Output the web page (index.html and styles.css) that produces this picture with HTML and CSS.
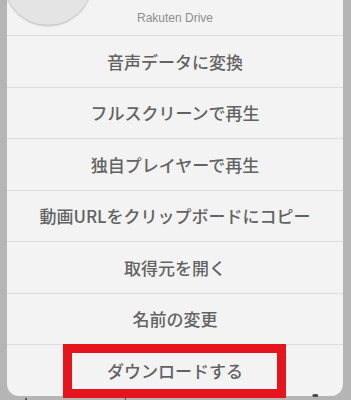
FILE: index.html
```html
<!DOCTYPE html>
<html lang="ja">
<head>
<meta charset="utf-8">
<link rel="stylesheet" href="styles.css">
</head>
<body>
<div class="screen">
  <div class="sheet">
    <div class="avatar"></div>
    <div class="header">Rakuten Drive</div>
    <div class="row">音声データに変換</div>
    <div class="row">フルスクリーンで再生</div>
    <div class="row">独自プレイヤーで再生</div>
    <div class="row">動画URLをクリップボードにコピー</div>
    <div class="row">取得元を開く</div>
    <div class="row">名前の変更</div>
    <div class="row">ダウンロードする</div>
  </div>
  <div class="highlight"></div>
  <div class="tb tb1"></div>
  <div class="tb tb2"></div>
  <div class="tb tb3">•••</div>
</div>
</body>
</html>
```
FILE: styles.css
```css
html, body {
  margin: 0;
  padding: 0;
}
body {
  background: #b5b5b5;
  font-family: "Noto Sans CJK JP", "Noto Sans", sans-serif;
  overflow: hidden;
}
.screen {
  position: relative;
  width: 351px;
  height: 400px;
  overflow: hidden;
}
.sheet {
  position: relative;
  margin-left: 7px;
  width: 336px;
  background: #f3f3f3;
  border-radius: 0 0 12px 12px;
  overflow: hidden;
}
.avatar {
  position: absolute;
  left: -3px;
  top: -63px;
  width: 88px;
  height: 88px;
  border-radius: 50%;
  background: #e4e4e4;
  box-shadow: 0 1px 2px rgba(0,0,0,0.25);
}
.header {
  height: 35px;
  display: flex;
  align-items: center;
  justify-content: center;
  font-family: "Liberation Sans", "Noto Sans", sans-serif;
  font-size: 12px;
  color: #8d8d8d;
}
.row {
  height: 51.5px;
  box-sizing: border-box;
  border-top: 1px solid #dcdcdc;
  display: flex;
  align-items: center;
  justify-content: center;
  font-size: 17px;
  font-weight: 500;
  color: #636363;
}
.highlight {
  position: absolute;
  left: 63px;
  top: 344px;
  width: 223px;
  height: 54px;
  box-sizing: border-box;
  border: 9px solid #e5141d;
}
.tb {
  position: absolute;
  background: #555;
}
.tb1 {
  left: 25px;
  top: 398px;
  width: 2px;
  height: 2px;
}
.tb2 {
  left: 125px;
  top: 397px;
  width: 1px;
  height: 3px;
}
.tb3 {
  background: none;
  left: 312px;
  top: 390px;
  font-family: "Liberation Sans", sans-serif;
  font-size: 10px;
  letter-spacing: -2px;
  color: #444;
}
```
